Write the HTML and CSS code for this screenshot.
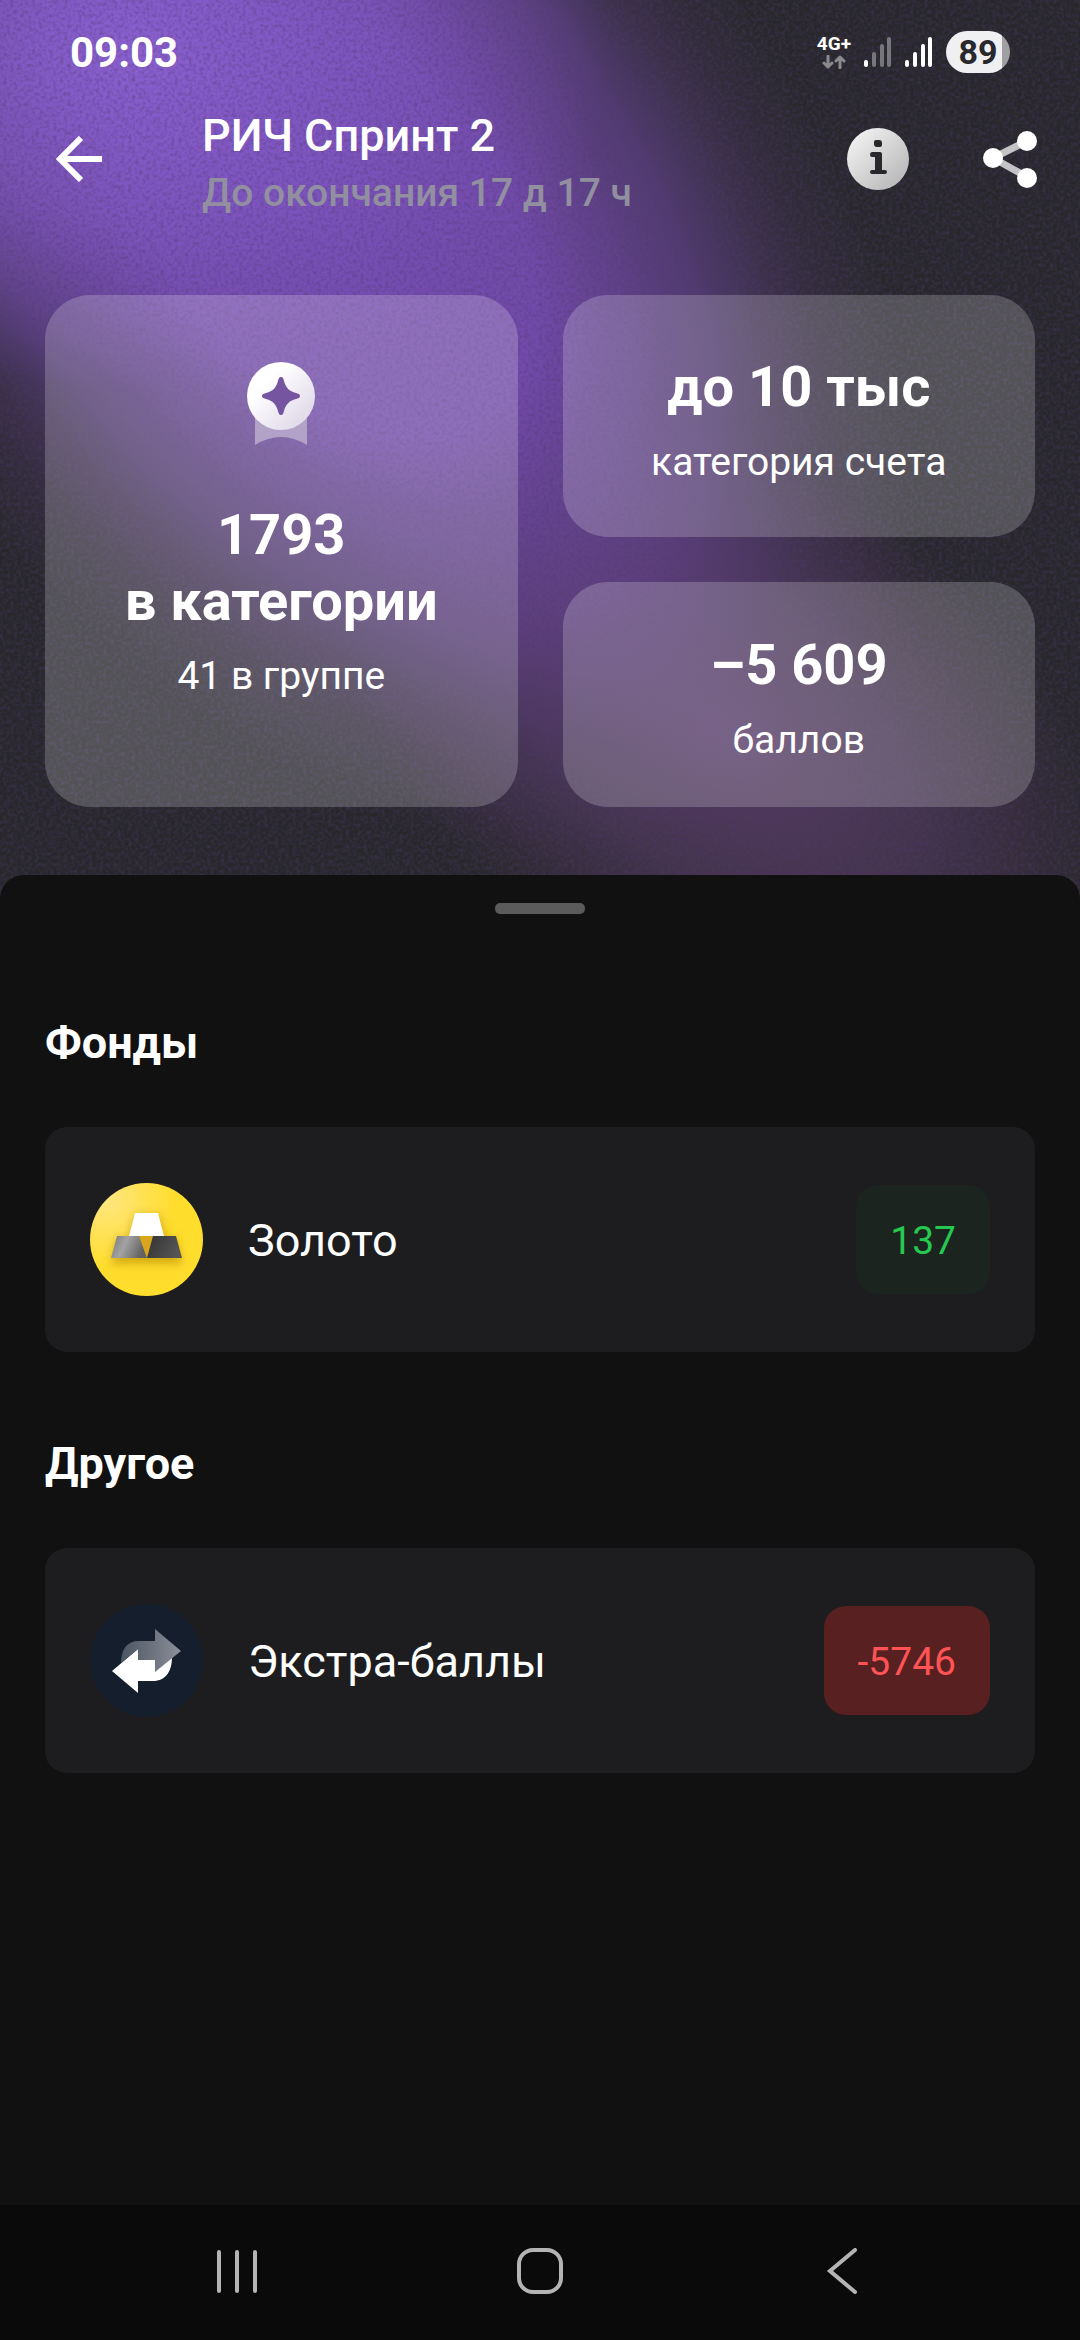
FILE: index.html
```html
<!DOCTYPE html>
<html lang="ru">
<head>
    <meta charset="UTF-8">
    <meta name="viewport" content="width=device-width, initial-scale=1.0">
    <title>РИЧ Спринт 2</title>
    <link rel="stylesheet" href="styles.css">
</head>
<body>
    <div class="hero">
        <!-- Glow and grain behind the header -->
        <svg class="hero-bg" viewBox="0 0 1080 900" preserveAspectRatio="none" aria-hidden="true">
            <defs>
                <radialGradient id="glow-main">
                    <stop offset="0" stop-color="#754cb2"/>
                    <stop offset="0.35" stop-color="#754cb0" stop-opacity="0.95"/>
                    <stop offset="0.65" stop-color="#6b469a" stop-opacity="0.6"/>
                    <stop offset="0.85" stop-color="#5f4080" stop-opacity="0.2"/>
                    <stop offset="1" stop-color="#5b3d80" stop-opacity="0"/>
                </radialGradient>
                <radialGradient id="glow-top">
                    <stop offset="0" stop-color="#8a60d0"/>
                    <stop offset="0.5" stop-color="#8259c6" stop-opacity="0.7"/>
                    <stop offset="1" stop-color="#7a50b8" stop-opacity="0"/>
                </radialGradient>
                <radialGradient id="glow-low">
                    <stop offset="0" stop-color="#664278" stop-opacity="0.75"/>
                    <stop offset="0.5" stop-color="#60406f" stop-opacity="0.5"/>
                    <stop offset="1" stop-color="#5c3a68" stop-opacity="0"/>
                </radialGradient>
                <filter id="grain" x="0" y="0" width="100%" height="100%">
                    <feTurbulence type="fractalNoise" baseFrequency="0.28" numOctaves="2" seed="4"/>
                    <feColorMatrix values="0 0 0 0 0.08  0 0 0 0 0.04  0 0 0 0 0.16  0.9 0 0 0 -0.36"/>
                </filter>
            </defs>
            <rect width="1080" height="900" fill="#28282c"/>
            <ellipse cx="720" cy="730" rx="440" ry="270" transform="rotate(35 720 730)" fill="url(#glow-low)"/>
            <ellipse cx="330" cy="220" rx="730" ry="460" transform="rotate(50 330 220)" fill="url(#glow-main)"/>
            <ellipse cx="130" cy="50" rx="480" ry="340" fill="url(#glow-top)"/>
            <rect width="1080" height="900" filter="url(#grain)"/>
        </svg>

        <div class="status-bar">
            <span class="time">09:03</span>
            <div class="status-icons">
                <div class="network">
                    <span>4G+</span>
                    <svg width="24" height="14" viewBox="0 0 24 14" fill="none" stroke="#8b8b8f" stroke-width="3" stroke-linecap="round" stroke-linejoin="round">
                        <path d="M6 1v11M2 8l4 4 4-4M18 13V2M14 6l4-4 4 4"/>
                    </svg>
                </div>
                <svg width="28" height="30" viewBox="0 0 28 30" fill="#77777b">
                    <rect x="0" y="23" width="4" height="7" rx="2" fill="#fff"/>
                    <rect x="8" y="15" width="4" height="15" rx="2"/>
                    <rect x="16" y="7" width="4" height="23" rx="2"/>
                    <rect x="23" y="0" width="4" height="30" rx="2"/>
                </svg>
                <svg width="28" height="30" viewBox="0 0 28 30" fill="#fff">
                    <rect x="0" y="23" width="4" height="7" rx="2"/>
                    <rect x="8" y="15" width="4" height="15" rx="2"/>
                    <rect x="16" y="7" width="4" height="23" rx="2"/>
                    <rect x="23" y="0" width="4" height="30" rx="2"/>
                </svg>
                <span class="battery">89</span>
            </div>
        </div>

        <header class="header">
            <button class="icon-button" aria-label="Назад">
                <svg width="46" height="46" viewBox="0 0 46 46" fill="none" stroke="#fff" stroke-width="6">
                    <path d="M46 23H5M25 2L4 23l21 21"/>
                </svg>
            </button>
            <div class="header-text">
                <h1>РИЧ Спринт 2</h1>
                <p>До окончания 17 д 17 ч</p>
            </div>
            <div class="header-actions">
                <button class="icon-button" aria-label="Информация">
                    <svg width="62" height="62" viewBox="0 0 62 62">
                        <defs>
                            <linearGradient id="info-fill" x1="0" y1="0" x2="1" y2="1">
                                <stop offset="0.15" stop-color="#eeeeee"/>
                                <stop offset="1" stop-color="#b0b0b2"/>
                            </linearGradient>
                        </defs>
                        <circle cx="31" cy="31" r="31" fill="url(#info-fill)"/>
                        <path d="M29 12h3q3 0 3 3v2q0 2-2 2h-3q-3 0-3-3v-2q0-2 2-2zM25 24h8q2 0 2 2v16h3q2 0 2 2t-2 2H25q-2 0-2-2t2-2h3V29h-3q-2 0-2-2.500t2-2.500z" fill="#28282d"/>
                    </svg>
                </button>
                <button class="icon-button" aria-label="Поделиться">
                    <svg width="54" height="58" viewBox="0 0 54 58">
                        <path d="M44 11L10 28l34 19" fill="none" stroke="#c4c4c6" stroke-width="7"/>
                        <g fill="#fff">
                            <circle cx="10" cy="28" r="10"/>
                            <circle cx="44" cy="11" r="10"/>
                            <circle cx="44" cy="48" r="10"/>
                        </g>
                    </svg>
                </button>
            </div>
        </header>

        <div class="tiles">
            <div class="tile tile-rank">
                <svg class="medal" width="90" height="90" viewBox="0 0 90 90">
                    <defs>
                        <linearGradient id="medal-fill" x1="0" y1="0" x2="1" y2="1">
                            <stop offset="0.3" stop-color="#ffffff"/>
                            <stop offset="1" stop-color="#d8d0e4"/>
                        </linearGradient>
                    </defs>
                    <path d="M19 62h52v28q-26-16-52 0z" fill="#b3a2c8"/>
                    <circle cx="45" cy="41" r="34" fill="url(#medal-fill)"/>
                    <path d="M45 22c2 0 2.500 2 3 4 2 7 5 10 12 12 2 .6 4 1 4 3s-2 2.400-4 3c-7 2-10 5-12 12-.5 2-1 4-3 4s-2.500-2-3-4c-2-7-5-10-12-12-2-.6-4-1-4-3s2-2.400 4-3c7-2 10-5 12-12 .5-2 1-4 3-4z" fill="#75559f"/>
                </svg>
                <h2>1793<br>в категории</h2>
                <p>41 в группе</p>
            </div>
            <div class="tiles-column">
                <div class="tile tile-account">
                    <h2>до 10 тыс</h2>
                    <p>категория счета</p>
                </div>
                <div class="tile tile-points">
                    <h2>–5 609</h2>
                    <p>баллов</p>
                </div>
            </div>
        </div>
    </div>

    <main class="sheet">
        <div class="handle"></div>

        <section class="group">
            <h3>Фонды</h3>
            <div class="card">
                <svg width="113" height="113" viewBox="0 0 113 113">
                    <defs>
                        <radialGradient id="gold-fill" cx="0.15" cy="0.15" r="0.6">
                            <stop offset="0" stop-color="#ffe680"/>
                            <stop offset="1" stop-color="#ffdd2d"/>
                        </radialGradient>
                        <linearGradient id="bar-left" x1="0" y1="0" x2="1" y2="0.300">
                            <stop offset="0" stop-color="#777777"/>
                            <stop offset="0.45" stop-color="#a3a3a3"/>
                            <stop offset="1" stop-color="#626262"/>
                        </linearGradient>
                        <linearGradient id="bar-right" x1="0" y1="0" x2="1" y2="0.300">
                            <stop offset="0" stop-color="#333333"/>
                            <stop offset="1" stop-color="#555555"/>
                        </linearGradient>
                        <filter id="bar-shadow" x="-30%" y="-30%" width="160%" height="180%">
                            <feGaussianBlur stdDeviation="5"/>
                        </filter>
                    </defs>
                    <circle cx="56.500" cy="56.500" r="56.500" fill="url(#gold-fill)"/>
                    <path d="M45 32h24l7 23h10l6 26H21l6-26h12z" fill="#b88a00" opacity="0.6" filter="url(#bar-shadow)"/>
                    <path d="M49 53h15l-7 22z" fill="#d9a51c"/>
                    <path d="M45 30h23l6 23H39z" fill="#fff"/>
                    <path d="M27 53h22l8 22H21z" fill="url(#bar-left)"/>
                    <path d="M63 53h23l6 22H57z" fill="url(#bar-right)"/>
                </svg>
                <span class="name">Золото</span>
                <span class="badge badge-plus">137</span>
            </div>
        </section>

        <section class="group">
            <h3>Другое</h3>
            <div class="card">
                <svg width="113" height="113" viewBox="0 0 113 113">
                    <defs>
                        <linearGradient id="arrow-back" x1="0" y1="0" x2="1" y2="0">
                            <stop offset="0" stop-color="#4c5563"/>
                            <stop offset="1" stop-color="#8b9099"/>
                        </linearGradient>
                    </defs>
                    <circle cx="56.500" cy="56.500" r="56.500" fill="#141e2c"/>
                    <path d="M22 67l26-22v11h17l17-3c0 14-6 24-19 24H48v12z" fill="#fff"/>
                    <path d="M31 59c0-14 6-22 18-22h16V25l26 22-26 21V56H48V45L31 59z" fill="url(#arrow-back)"/>
                </svg>
                <span class="name">Экстра-баллы</span>
                <span class="badge badge-minus">-5746</span>
            </div>
        </section>
    </main>

    <nav class="nav-bar">
        <button class="nav-button" aria-label="Недавние">
            <svg width="46" height="46" viewBox="0 0 46 46" stroke="#b4b4b4" stroke-width="4" stroke-linecap="round">
                <path d="M4 4v39M22 4v39M40 4v39"/>
            </svg>
        </button>
        <button class="nav-button" aria-label="Домой">
            <svg width="46" height="46" viewBox="0 0 46 46" fill="none" stroke="#b4b4b4" stroke-width="4">
                <rect x="2" y="2" width="42" height="42" rx="14"/>
            </svg>
        </button>
        <button class="nav-button" aria-label="Назад">
            <svg width="46" height="46" viewBox="0 0 46 46" fill="none" stroke="#b4b4b4" stroke-width="4" stroke-linecap="round">
                <path d="M36 2L11 23l25 21"/>
            </svg>
        </button>
    </nav>
</body>
</html>
```
FILE: styles.css
```css
* {
    box-sizing: border-box;
}
body {
    font-family: Roboto, "Noto Sans", sans-serif;
    margin: 0;
    min-height: 100vh;
    display: flex;
    flex-direction: column;
    background-color: #111111;
    color: white;
}
h1, h2, h3, p {
    margin: 0;
}
svg {
    display: block;
    flex: none;
}
button {
    padding: 0;
    border: none;
    background: none;
    cursor: pointer;
}

/* Top part with the purple glow */
.hero {
    position: relative;
    padding-bottom: 92px;
}
.hero-bg {
    position: absolute;
    inset: 0;
    width: 100%;
    height: 100%;
}
.status-bar, .header, .tiles {
    position: relative;
}
.status-bar {
    height: 104px;
    padding: 0 70px;
    display: flex;
    justify-content: space-between;
    align-items: center;
}
.time {
    font-size: 42px;
    font-weight: 700;
}
.status-icons {
    display: flex;
    align-items: center;
    gap: 13px;
}
.network {
    display: flex;
    flex-direction: column;
    align-items: center;
    gap: 2px;
    font-size: 19px;
    line-height: 18px;
    font-weight: 700;
}
.battery {
    width: 64px;
    height: 42px;
    border-radius: 21px;
    background: linear-gradient(to right, #f0f0f2 88%, #a0a0a3 88%);
    color: #28282d;
    font-size: 34px;
    line-height: 42px;
    font-weight: 700;
    text-align: center;
}
.header {
    display: flex;
    padding: 5px 43px 0 56px;
}
.icon-button {
    height: 100px;
    display: flex;
    align-items: center;
}
.header-text {
    flex: 1;
    margin-left: 100px;
}
.header h1 {
    font-size: 45px;
    line-height: 54px;
    font-weight: 500;
}
.header p {
    margin-top: 7px;
    font-size: 39px;
    line-height: 46px;
    font-weight: 500;
    color: #918fa0;
}
.header-actions {
    display: flex;
    gap: 74px;
}

.tiles {
    display: grid;
    grid-template-columns: 1fr 1fr;
    gap: 45px;
    padding: 79px 45px 0;
}
.tiles-column {
    display: flex;
    flex-direction: column;
    gap: 45px;
}
.tile {
    display: flex;
    flex-direction: column;
    align-items: center;
    border-radius: 45px;
    background-color: rgba(255, 255, 255, 0.2);
    text-align: center;
}
.tile h2 {
    font-size: 56px;
    line-height: 66px;
    font-weight: 700;
}
.tile p {
    margin-top: 19px;
    font-size: 39px;
    line-height: 46px;
}
.tile-rank {
    padding-top: 60px;
}
.tile-account {
    padding: 59px 0 52px;
}
.tile-points {
    padding: 50px 0 44px;
}
.medal {
    margin-bottom: 57px;
}

/* Bottom sheet with the list of points */
.sheet {
    position: relative;
    flex: 1;
    margin-top: -24px;
    padding: 28px 45px 85px;
    border-radius: 24px 24px 0 0;
    background-color: #111111;
}
.handle {
    width: 90px;
    height: 11px;
    margin: 0 auto 102px;
    border-radius: 5px;
    background-color: #5b5b5b;
}
.group {
    margin-bottom: 85px;
}
.group h3 {
    margin-bottom: 57px;
    font-size: 45px;
    line-height: 54px;
    font-weight: 700;
}
.card {
    display: flex;
    align-items: center;
    gap: 45px;
    padding: 56px 45px;
    border-radius: 22px;
    background-color: #1d1d1f;
}
.name {
    flex: 1;
    padding-top: 3px;
    font-size: 45px;
    line-height: 54px;
}
.badge {
    padding: 33px 34px 30px;
    border-radius: 22px;
    font-size: 39px;
    line-height: 46px;
}
.badge-plus {
    background-color: #1c241f;
    color: #26c94f;
}
.badge-minus {
    background-color: #582021;
    color: #ff5355;
}

.nav-bar {
    height: 135px;
    padding: 0 87px 3px;
    display: flex;
    justify-content: space-around;
    align-items: center;
    background-color: #0a0a0a;
}
```
